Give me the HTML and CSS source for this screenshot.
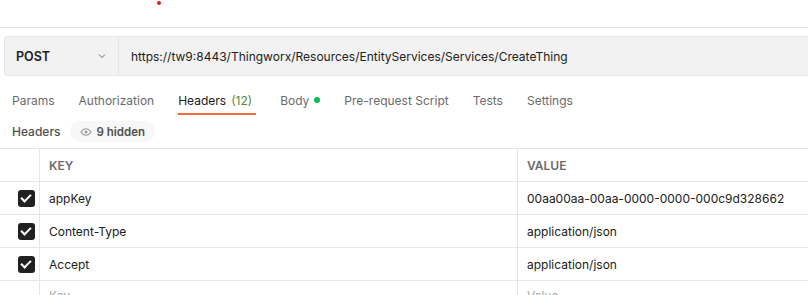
FILE: index.html
```html
<!DOCTYPE html>
<html lang="en">
<head>
    <meta charset="UTF-8">
    <title>Request - Headers</title>
    <link rel="stylesheet" href="styles.css">
</head>
<body>
    <div class="topbar">
        <span class="dot"></span>
    </div>

    <div class="request">
        <div class="method">
            <span>POST</span>
            <svg width="12" height="12" viewBox="0 0 12 12"><path d="M3 4.5l3 3 3-3" fill="none" stroke="#6b6b6b" stroke-width="1"/></svg>
        </div>
        <div class="url">https://tw9:8443/Thingworx/Resources/EntityServices/Services/CreateThing</div>
    </div>

    <div class="tabs">
        <div class="tab">Params</div>
        <div class="tab">Authorization</div>
        <div class="tab active">Headers <span class="count">(12)</span></div>
        <div class="tab">Body <span class="green-dot"></span></div>
        <div class="tab">Pre-request Script</div>
        <div class="tab">Tests</div>
        <div class="tab">Settings</div>
    </div>

    <div class="subbar">
        <span class="label">Headers</span>
        <span class="pill">
            <svg width="12" height="12" viewBox="0 0 12 12"><path d="M1 6c1.3-2.2 3-3.3 5-3.3s3.7 1.1 5 3.3c-1.3 2.2-3 3.3-5 3.3S2.3 8.2 1 6z" fill="none" stroke="#9a9a9a" stroke-width="1.1"/><circle cx="6" cy="6" r="1.5" fill="#9a9a9a"/></svg>
            9 hidden
        </span>
    </div>

    <div class="table">
        <div class="row head">
            <div class="cell check"></div>
            <div class="cell key">KEY</div>
            <div class="cell value">VALUE</div>
        </div>
        <div class="row">
            <div class="cell check"><span class="box"></span></div>
            <div class="cell key">appKey</div>
            <div class="cell value">00aa00aa-00aa-0000-0000-000c9d328662</div>
        </div>
        <div class="row">
            <div class="cell check"><span class="box"></span></div>
            <div class="cell key">Content-Type</div>
            <div class="cell value">application/json</div>
        </div>
        <div class="row">
            <div class="cell check"><span class="box"></span></div>
            <div class="cell key">Accept</div>
            <div class="cell value">application/json</div>
        </div>
        <div class="row placeholder">
            <div class="cell check"></div>
            <div class="cell key">Key</div>
            <div class="cell value">Value</div>
        </div>
    </div>
</body>
</html>
```

FILE: styles.css
```css
body {
    margin: 0;
    font-family: Inter, "Noto Sans", sans-serif;
    font-size: 12px;
    color: #212121;
    background-color: #fff;
    overflow: hidden;
}
.topbar {
    height: 27px;
    border-bottom: 1px solid #e6e6e6;
    position: relative;
}
.dot {
    position: absolute;
    left: 157px;
    top: 1px;
    width: 4px;
    height: 4px;
    border-radius: 50%;
    background-color: #e21b1b;
}
.request {
    display: flex;
    margin: 8px 0 0 4px;
    height: 38px;
    background-color: #f2f2f2;
    border: 1px solid #e6e6e6;
    border-right: none;
    border-radius: 4px 0 0 4px;
}
.method {
    width: 114px;
    display: flex;
    align-items: center;
    justify-content: space-between;
    padding: 0 10px 0 11px;
    box-sizing: border-box;
    border-right: 1px solid #e6e6e6;
    font-weight: 600;
    font-size: 12.5px;
}
.url {
    display: flex;
    align-items: center;
    padding-left: 12px;
    color: #212121;
    white-space: nowrap;
}
.tabs {
    display: flex;
    gap: 24px;
    padding: 0 12px;
    height: 39px;
}
.tab {
    display: flex;
    align-items: center;
    color: #6b6b6b;
    border-bottom: 2px solid transparent;
    box-sizing: border-box;
    padding-top: 11px;
    white-space: nowrap;
}
.tab.active {
    color: #212121;
    border-bottom-color: #f26b3a;
    padding-right: 4px;
}
.count {
    color: #55883a;
    margin-left: 5px;
}
.green-dot {
    width: 6px;
    height: 6px;
    border-radius: 50%;
    background-color: #0cbb52;
    margin-left: 5px;
}
.subbar {
    display: flex;
    align-items: center;
    gap: 9px;
    padding: 0 12px;
    height: 33px;
}
.label {
    color: #505050;
    font-weight: 500;
}
.pill {
    display: flex;
    align-items: center;
    gap: 5px;
    background-color: #f7f7f7;
    border-radius: 12px;
    padding: 0 10px 0 10px;
    height: 21px;
    font-size: 11.5px;
    font-weight: 600;
    color: #505050;
}
.table {
    border-top: 1px solid #e6e6e6;
}
.row {
    display: flex;
    height: 32px;
    border-bottom: 1px solid #e6e6e6;
}
.cell {
    display: flex;
    align-items: center;
    white-space: nowrap;
}
.check {
    width: 40px;
    border-right: 1px solid #e6e6e6;
    box-sizing: border-box;
    padding-left: 18px;
}
.key {
    width: 478px;
    padding-left: 9px;
    box-sizing: border-box;
    border-right: 1px solid #e6e6e6;
}
.value {
    padding-left: 9px;
}
.head .cell {
    font-size: 12px;
    font-weight: 600;
    color: #6b6b6b;
}
.box {
    width: 17px;
    height: 17px;
    border-radius: 3px;
    background-color: #212121;
    position: relative;
}
.box::after {
    content: "";
    position: absolute;
    left: 5px;
    top: 2px;
    width: 4px;
    height: 8px;
    border: solid #fff;
    border-width: 0 2px 2px 0;
    transform: rotate(45deg);
}
.placeholder .cell {
    color: #a6a6a6;
    align-items: flex-start;
    padding-top: 7px;
}
```
